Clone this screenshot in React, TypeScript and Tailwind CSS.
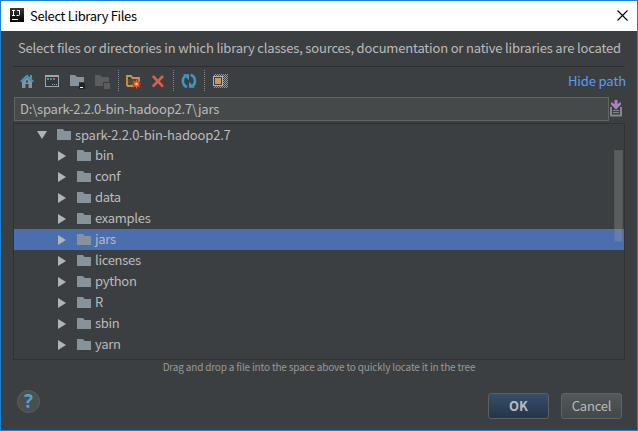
import React from "react";

const folders = ["bin", "conf", "data", "examples", "jars", "licenses", "python", "R", "sbin", "yarn"];

function Icon({ children, className = "" }: { children: React.ReactNode; className?: string }) {
  return (
    <svg width="16" height="16" viewBox="0 0 16 16" className={`shrink-0 ${className}`}>
      {children}
    </svg>
  );
}

function Divider({ className = "" }: { className?: string }) {
  return (
    <svg width="1" height="22" className={`shrink-0 ${className}`}>
      <path d="M.5 0V22" stroke="#85888a" strokeDasharray="1 1" />
    </svg>
  );
}

function FolderIcon() {
  return (
    <svg width="14" height="11" viewBox="0 0 14 11" className="shrink-0">
      <path d="M0 0H6L7.5 2H14V11H0Z" fill="#87939a" />
    </svg>
  );
}

function TitleBar() {
  return (
    <div className="flex h-[30px] shrink-0 items-center bg-white px-[9px] pb-[2px] text-black">
      <svg width="14" height="14" viewBox="0 0 14 14">
        <defs>
          <linearGradient id="logo" x1="0" y1="0" x2="0" y2="1">
            <stop offset="0" stopColor="#3a3a3a" />
            <stop offset="1" stopColor="#000" />
          </linearGradient>
        </defs>
        <rect width="14" height="14" fill="url(#logo)" />
        <path d="M2 2.5H5M3.5 2.5V7M2 7.5H5M7 2.5H10M9.5 2.5V6.5Q9.5 7.5 8.5 7.5H6.5" stroke="#fff" fill="none" />
        <path d="M2 11.5H8" stroke="#fff" />
      </svg>
      <span className="ml-[6px] pt-px text-[13px] leading-none tracking-[-0.35px]">Select Library Files</span>
      <svg width="11" height="11" viewBox="0 0 11 11" className="ml-auto">
        <path d="M.5 .5L10.5 10.5M10.5 .5L.5 10.5" stroke="#000" strokeWidth="1.1" />
      </svg>
    </div>
  );
}

function Toolbar() {
  return (
    <div className="flex h-[30px] shrink-0 items-center pb-[2px] pl-[6px]">
      <Icon>
        <path d="M3 8.5L8 4L13 8.5V15H9.5V11H6.5V15H3Z" fill="#87939a" />
        <path d="M7 7.5H9V9.5H7Z" fill="#3c3f41" />
        <path d="M1.7 8.6L8 2.6L14.3 8.6" stroke="#3f9cc0" strokeWidth="1.7" fill="none" />
        <path d="M11 2H13V6.5L11 4.5Z" fill="#3f9cc0" />
      </Icon>
      <Icon className="ml-[9px]">
        <path d="M1 2H15V14H1Z" fill="#9aa7b0" />
        <path d="M2 4H14V13H2Z" fill="#34383a" />
        <path d="M3 5H5V7H3Z" fill="#5aa83a" />
        <path d="M6 5H8V7H6Z" fill="#3592c4" />
        <path d="M9 5H11V7H9Z" fill="#e05a2b" />
        <path d="M8 11.5H13" stroke="#9aa7b0" strokeDasharray="1 1" />
      </Icon>
      <Icon className="ml-[9px]">
        <path d="M1 2H6L8 4H15V9H10V13H1Z" fill="#87939a" />
        <path d="M10 10H16V16H10Z" fill="#222426" />
        <path d="M11 14.5H14" stroke="#fff" />
      </Icon>
      <Icon className="ml-[9px]">
        <path d="M1 2H6L8 4H15V9H9V13H1Z" fill="#5a5c5d" />
        <path d="M10 10H16V16H10Z" fill="#5a5c5d" />
      </Icon>
      <Divider className="ml-[8px]" />
      <Icon className="ml-[6px]">
        <path d="M3 6H14V9L8 13H3Z" fill="#514936" />
        <path d="M2 13V3H6L7.5 5H14V9M2 13H8" stroke="#c69350" strokeWidth="1.8" fill="none" />
        <path d="M11.5 6.5V15.5M7 11H16M8.3 7.8L14.7 14.2M14.7 7.8L8.3 14.2" stroke="#f05137" strokeWidth="1.2" />
        <circle cx="11.5" cy="11" r="2.6" fill="#f25a3c" />
        <circle cx="11.5" cy="11" r="1.3" fill="#ffd277" />
      </Icon>
      <Icon className="ml-[9px]">
        <path d="M2.8 3L13 13.6M13 3L2.8 13.6" stroke="#d4614f" strokeWidth="2.7" />
      </Icon>
      <Divider className="ml-[7px]" />
      <Icon className="ml-[7px]">
        <path d="M6 14.2C1 12.5 .6 5.5 4.2 3.2M9.5 1.8C14.8 3.5 15.2 10.5 11.6 12.8" stroke="#4494c2" strokeWidth="2.5" fill="none" />
        <path d="M2 1.2H8V7.2ZM14 14.8H8V8.8Z" fill="#4494c2" />
      </Icon>
      <Divider className="ml-[7px]" />
      <Icon className="ml-[7px]">
        <defs>
          <pattern id="checks" width="2" height="2" patternUnits="userSpaceOnUse">
            <path d="M0 0H1V1H0ZM1 1H2V2H1Z" fill="#96999b" />
          </pattern>
        </defs>
        <path d="M2 1H16V15H2Z" fill="url(#checks)" />
        <path d="M1 3H11V13H1Z" fill="#b0b5b8" />
        <path d="M2 4H10V12H2Z" fill="#3c3f41" />
        <path d="M3 5H9V11H3Z" fill="#c99a59" />
      </Icon>
      <span className="-mr-px ml-auto pb-px text-[13px] leading-none tracking-[-0.1px] text-[#589df6]">Hide path</span>
    </div>
  );
}

function Tree() {
  return (
    <div className="relative mt-[2px] h-[237px] shrink-0 border border-[#2f3132] text-[13px] leading-[19px] tracking-[-0.17px]">
      <div className="flex h-[21px] items-center pl-[23px]">
        <svg width="10" height="8" viewBox="0 0 10 8"><path d="M0 0H10L5 8Z" fill="#b2b3b4" /></svg>
        <span className="ml-[10px] flex items-center gap-[4px]"><FolderIcon /><span className="pb-px">spark-2.2.0-bin-hadoop2.7</span></span>
      </div>
      {folders.map((name) => (
        <div key={name} className={`flex h-[21px] items-center pl-[44px] ${name === "jars" ? "bg-[#4b6eaf]" : ""}`}>
          <svg width="8" height="10" viewBox="0 0 8 10"><path d="M0 0L8 5L0 10Z" fill="#b2b3b4" /></svg>
          <span className="ml-[11px] flex items-center gap-[4px]"><FolderIcon /><span className="pb-[2px] tracking-[-0.3px]">{name}</span></span>
        </div>
      ))}
      <div className="absolute right-px top-[26px] h-[92px] w-[9px] border border-[#3c3f41]/20 bg-[#a6a6a6]/30" />
    </div>
  );
}

export default function App() {
  return (
    <div className="flex h-[431px] w-[638px] flex-col overflow-hidden border border-[#1883d7] bg-[#3c3f41] font-['Noto_Sans_CJK_SC','Noto_Sans',sans-serif] text-[#bbbbbb] whitespace-nowrap">
      <TitleBar />
      <div className="flex grow flex-col pl-[12px] pr-[12px]">
        <div className="flex h-[36px] shrink-0 items-center border-b border-[#2b2d2e] pb-[2px] pl-[5px] text-[13px] leading-none tracking-[-0.18px]">
          <span>Select files or directories in which library classes, sources, documentation or native libraries are located</span>
        </div>
        <Toolbar />
        <div className="flex h-[24px] shrink-0 items-center pl-px">
          <div className="flex h-[24px] w-[595px] items-center border border-[#646464] bg-[#45494a] pb-[2px] pl-[5px] text-[13px] leading-none tracking-[-0.2px]">
            <span>D:\spark-2.2.0-bin-hadoop2.7\jars</span>
          </div>
          <svg width="12" height="17" viewBox="0 0 12 17" className="-mt-[2px] ml-px">
            <path d="M1 7V15.5H11V7" stroke="#85888a" strokeWidth="2" fill="none" />
            <path d="M3 10.5H9M3 12.5H9" stroke="#85888a" />
            <path d="M4.5 0H7.5V4L11 2V4.5L6 9.5L1 4.5V2L4.5 4Z" fill="#a982bd" />
          </svg>
        </div>
        <Tree />
        <div className="flex h-[15px] shrink-0 items-center justify-center pb-[2px] text-[10px] leading-none tracking-[-0.18px] text-[#999999]"><span>Drag and drop a file into the space above to quickly locate it in the tree</span></div>
        <div className="mt-[15px] flex items-start pl-[4px] pr-[3px]">
          <div className="flex size-[23px] items-center justify-center rounded-full border border-[#5b5f61] bg-[#4b4f51] font-['Open_Sans'] text-[19px] font-bold leading-none text-[#4fa0cb]">?</div>
          <button className="ml-auto mt-[3px] h-[26px] w-[61px] rounded-[3px] border border-[#5c6062] bg-linear-to-b from-[#364e6d] to-[#253548] pb-[2px] text-[13px] leading-none font-bold">OK</button>
          <button className="ml-[12px] mt-[3px] h-[26px] w-[61px] rounded-[3px] border border-[#606364] bg-linear-to-b from-[#525759] to-[#43484a] pb-[2px] text-[13px] leading-none tracking-[-0.2px]">Cancel</button>
        </div>
      </div>
    </div>
  );
}
